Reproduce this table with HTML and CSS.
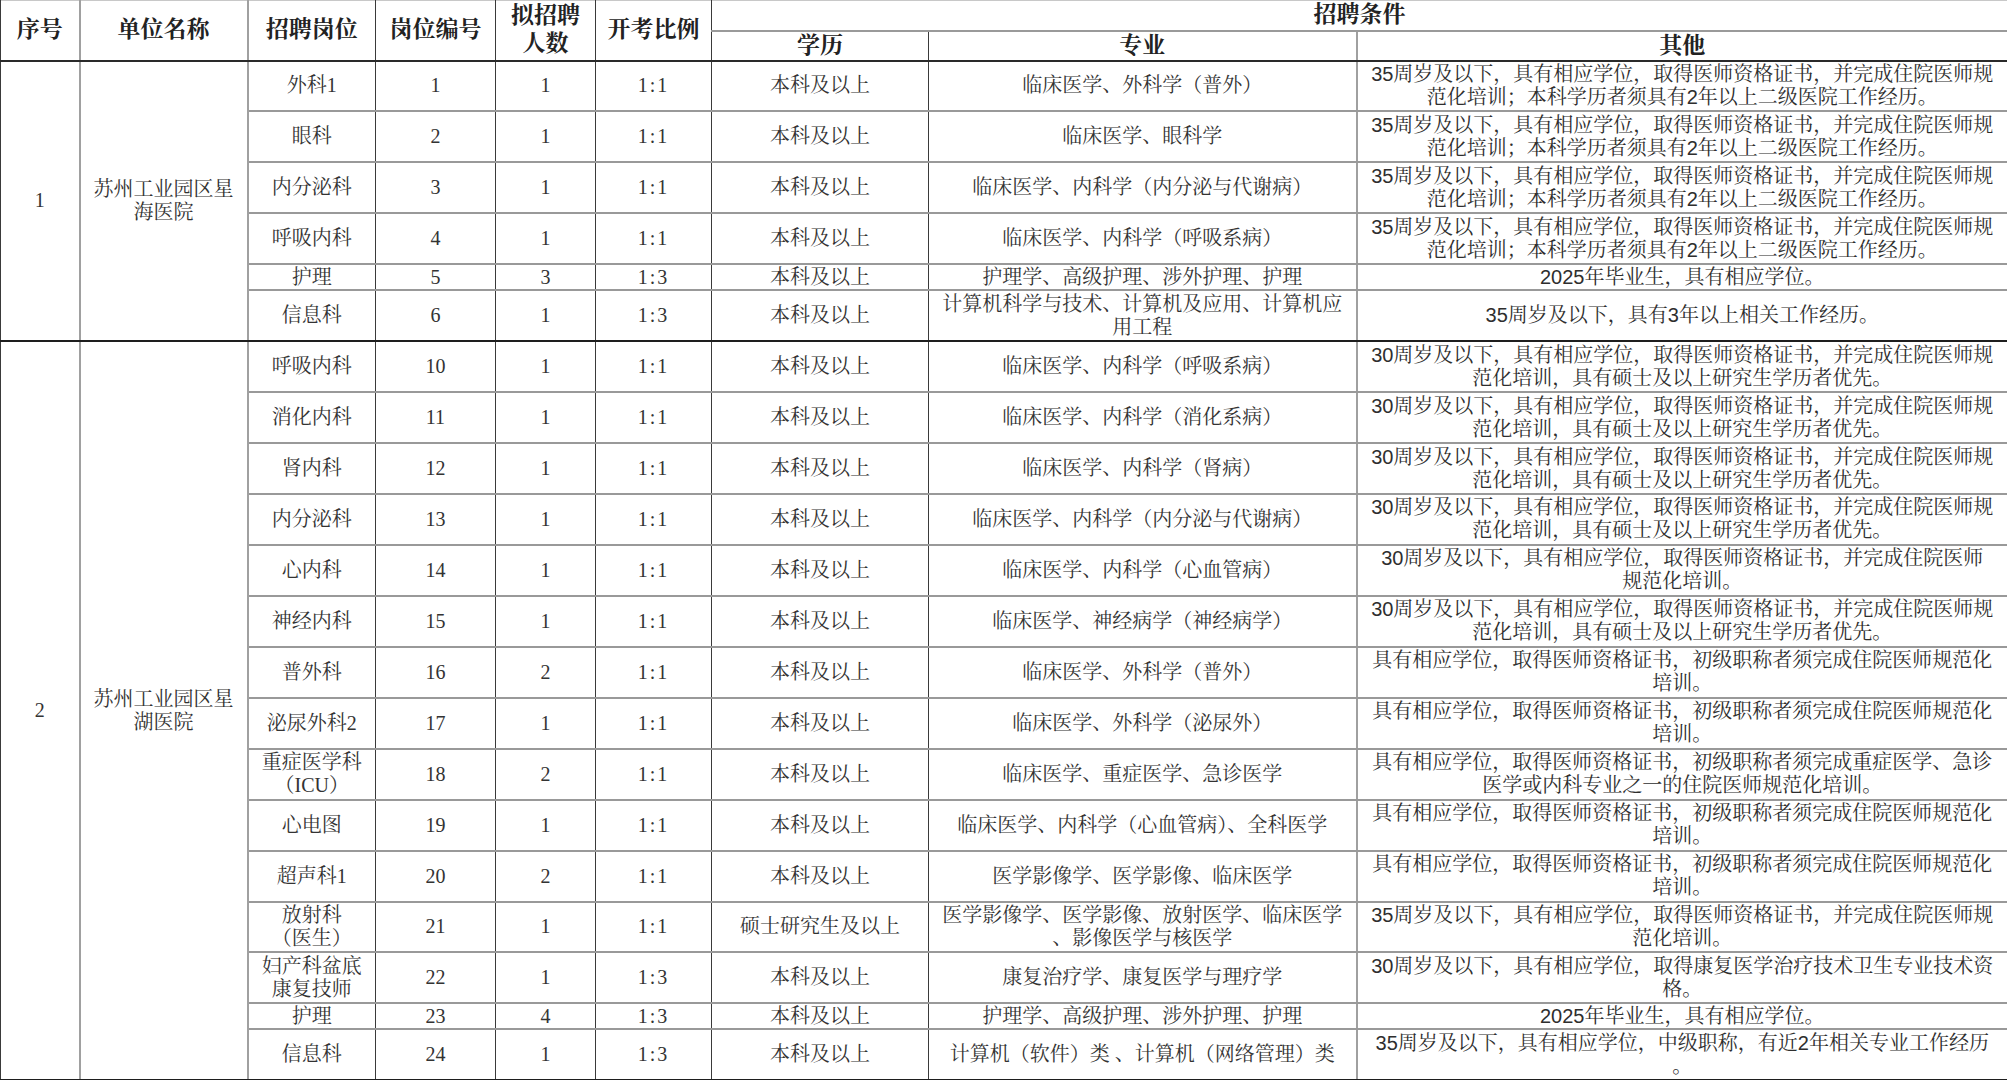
FILE: index.html
```html
<!DOCTYPE html>
<html lang="zh-CN">
<head>
<meta charset="utf-8">
<title>招聘岗位表</title>
<link rel="stylesheet" href="styles.css">
</head>
<body>
<table class="tbl">
  <colgroup>
    <col class="c-no"><col class="c-unit"><col class="c-post"><col class="c-code"><col class="c-num"><col class="c-ratio"><col class="c-edu"><col class="c-major"><col class="c-other">
  </colgroup>
  <thead>
    <tr class="h1">
      <th rowspan="2" class="gl">序号</th>
      <th rowspan="2" class="gl">单位名称</th>
      <th rowspan="2">招聘岗位</th>
      <th rowspan="2">岗位编号</th>
      <th rowspan="2" class="two">拟招聘<br>人数</th>
      <th rowspan="2">开考比例</th>
      <th colspan="3" class="cond">招聘条件</th>
    </tr>
    <tr class="h2">
      <th>学历</th>
      <th class="gl">专业</th>
      <th>其他</th>
    </tr>
  </thead>
  <tbody>
    <tr class="t">
      <td rowspan="6" class="gl num grp">1</td>
      <td rowspan="6" class="gl grp">苏州工业园区星<br>海医院</td>
      <td>外科1</td><td class="num">1</td><td class="num">1</td><td class="num ratio">1:1</td>
      <td>本科及以上</td><td class="gl">临床医学、外科学（普外）</td>
      <td class="oth">35周岁及以下，具有相应学位，取得医师资格证书，并完成住院医师规<br>范化培训；本科学历者须具有2年以上二级医院工作经历。</td>
    </tr>
    <tr class="t">
      <td>眼科</td><td class="num">2</td><td class="num">1</td><td class="num ratio">1:1</td>
      <td>本科及以上</td><td class="gl">临床医学、眼科学</td>
      <td class="oth">35周岁及以下，具有相应学位，取得医师资格证书，并完成住院医师规<br>范化培训；本科学历者须具有2年以上二级医院工作经历。</td>
    </tr>
    <tr class="t">
      <td>内分泌科</td><td class="num">3</td><td class="num">1</td><td class="num ratio">1:1</td>
      <td>本科及以上</td><td class="gl">临床医学、内科学（内分泌与代谢病）</td>
      <td class="oth">35周岁及以下，具有相应学位，取得医师资格证书，并完成住院医师规<br>范化培训；本科学历者须具有2年以上二级医院工作经历。</td>
    </tr>
    <tr class="t">
      <td>呼吸内科</td><td class="num">4</td><td class="num">1</td><td class="num ratio">1:1</td>
      <td>本科及以上</td><td class="gl">临床医学、内科学（呼吸系病）</td>
      <td class="oth">35周岁及以下，具有相应学位，取得医师资格证书，并完成住院医师规<br>范化培训；本科学历者须具有2年以上二级医院工作经历。</td>
    </tr>
    <tr class="s">
      <td>护理</td><td class="num">5</td><td class="num">3</td><td class="num ratio">1:3</td>
      <td>本科及以上</td><td class="gl">护理学、高级护理、涉外护理、护理</td>
      <td class="oth">2025年毕业生，具有相应学位。</td>
    </tr>
    <tr class="t end">
      <td>信息科</td><td class="num">6</td><td class="num">1</td><td class="num ratio">1:3</td>
      <td>本科及以上</td><td class="gl">计算机科学与技术、计算机及应用、计算机应<br>用工程</td>
      <td class="oth">35周岁及以下，具有3年以上相关工作经历。</td>
    </tr>

    <tr class="t">
      <td rowspan="15" class="gl num grp">2</td>
      <td rowspan="15" class="gl grp">苏州工业园区星<br>湖医院</td>
      <td>呼吸内科</td><td class="num">10</td><td class="num">1</td><td class="num ratio">1:1</td>
      <td>本科及以上</td><td class="gl">临床医学、内科学（呼吸系病）</td>
      <td class="oth">30周岁及以下，具有相应学位，取得医师资格证书，并完成住院医师规<br>范化培训，具有硕士及以上研究生学历者优先。</td>
    </tr>
    <tr class="t">
      <td>消化内科</td><td class="num">11</td><td class="num">1</td><td class="num ratio">1:1</td>
      <td>本科及以上</td><td class="gl">临床医学、内科学（消化系病）</td>
      <td class="oth">30周岁及以下，具有相应学位，取得医师资格证书，并完成住院医师规<br>范化培训，具有硕士及以上研究生学历者优先。</td>
    </tr>
    <tr class="t">
      <td>肾内科</td><td class="num">12</td><td class="num">1</td><td class="num ratio">1:1</td>
      <td>本科及以上</td><td class="gl">临床医学、内科学（肾病）</td>
      <td class="oth">30周岁及以下，具有相应学位，取得医师资格证书，并完成住院医师规<br>范化培训，具有硕士及以上研究生学历者优先。</td>
    </tr>
    <tr class="t">
      <td>内分泌科</td><td class="num">13</td><td class="num">1</td><td class="num ratio">1:1</td>
      <td>本科及以上</td><td class="gl">临床医学、内科学（内分泌与代谢病）</td>
      <td class="oth">30周岁及以下，具有相应学位，取得医师资格证书，并完成住院医师规<br>范化培训，具有硕士及以上研究生学历者优先。</td>
    </tr>
    <tr class="t">
      <td>心内科</td><td class="num">14</td><td class="num">1</td><td class="num ratio">1:1</td>
      <td>本科及以上</td><td class="gl">临床医学、内科学（心血管病）</td>
      <td class="oth">30周岁及以下，具有相应学位，取得医师资格证书，并完成住院医师<br>规范化培训。</td>
    </tr>
    <tr class="t">
      <td>神经内科</td><td class="num">15</td><td class="num">1</td><td class="num ratio">1:1</td>
      <td>本科及以上</td><td class="gl">临床医学、神经病学（神经病学）</td>
      <td class="oth">30周岁及以下，具有相应学位，取得医师资格证书，并完成住院医师规<br>范化培训，具有硕士及以上研究生学历者优先。</td>
    </tr>
    <tr class="t">
      <td>普外科</td><td class="num">16</td><td class="num">2</td><td class="num ratio">1:1</td>
      <td>本科及以上</td><td class="gl">临床医学、外科学（普外）</td>
      <td class="oth">具有相应学位，取得医师资格证书，初级职称者须完成住院医师规范化<br>培训。</td>
    </tr>
    <tr class="t">
      <td>泌尿外科2</td><td class="num">17</td><td class="num">1</td><td class="num ratio">1:1</td>
      <td>本科及以上</td><td class="gl">临床医学、外科学（泌尿外）</td>
      <td class="oth">具有相应学位，取得医师资格证书，初级职称者须完成住院医师规范化<br>培训。</td>
    </tr>
    <tr class="t">
      <td>重症医学科<br>（ICU）</td><td class="num">18</td><td class="num">2</td><td class="num ratio">1:1</td>
      <td>本科及以上</td><td class="gl">临床医学、重症医学、急诊医学</td>
      <td class="oth">具有相应学位，取得医师资格证书，初级职称者须完成重症医学、急诊<br>医学或内科专业之一的住院医师规范化培训。</td>
    </tr>
    <tr class="t">
      <td>心电图</td><td class="num">19</td><td class="num">1</td><td class="num ratio">1:1</td>
      <td>本科及以上</td><td class="gl">临床医学、内科学（心血管病）、全科医学</td>
      <td class="oth">具有相应学位，取得医师资格证书，初级职称者须完成住院医师规范化<br>培训。</td>
    </tr>
    <tr class="t">
      <td>超声科1</td><td class="num">20</td><td class="num">2</td><td class="num ratio">1:1</td>
      <td>本科及以上</td><td class="gl">医学影像学、医学影像、临床医学</td>
      <td class="oth">具有相应学位，取得医师资格证书，初级职称者须完成住院医师规范化<br>培训。</td>
    </tr>
    <tr class="t">
      <td>放射科<br>（医生）</td><td class="num">21</td><td class="num">1</td><td class="num ratio">1:1</td>
      <td>硕士研究生及以上</td><td class="gl">医学影像学、医学影像、放射医学、临床医学<br>、影像医学与核医学</td>
      <td class="oth">35周岁及以下，具有相应学位，取得医师资格证书，并完成住院医师规<br>范化培训。</td>
    </tr>
    <tr class="t">
      <td>妇产科盆底<br>康复技师</td><td class="num">22</td><td class="num">1</td><td class="num ratio">1:3</td>
      <td>本科及以上</td><td class="gl">康复治疗学、康复医学与理疗学</td>
      <td class="oth">30周岁及以下，具有相应学位，取得康复医学治疗技术卫生专业技术资<br>格。</td>
    </tr>
    <tr class="s">
      <td>护理</td><td class="num">23</td><td class="num">4</td><td class="num ratio">1:3</td>
      <td>本科及以上</td><td class="gl">护理学、高级护理、涉外护理、护理</td>
      <td class="oth">2025年毕业生，具有相应学位。</td>
    </tr>
    <tr class="t end">
      <td>信息科</td><td class="num">24</td><td class="num">1</td><td class="num ratio">1:3</td>
      <td>本科及以上</td><td class="gl">计算机（软件）类&nbsp;、计算机（网络管理）类</td>
      <td class="oth">35周岁及以下，具有相应学位，中级职称，有近2年相关专业工作经历<br>。</td>
    </tr>
  </tbody>
</table>
</body>
</html>
```

FILE: styles.css
```css
html, body {
  margin: 0;
  padding: 0;
  background: #ffffff;
  overflow: hidden;
}

.tbl {
  width: 2007px;
  border-collapse: collapse;
  table-layout: fixed;
  font-family: "Liberation Serif", "Noto Serif CJK SC", "Noto Sans CJK SC", serif;
  color: #333333;
  border-top: 1px solid #c8c8c8;
}

.c-no { width: 79px; }
.c-unit { width: 168px; }
.c-post { width: 128px; }
.c-code { width: 120px; }
.c-num { width: 100px; }
.c-ratio { width: 116px; }
.c-edu { width: 217px; }
.c-major { width: 428px; }
.c-other { width: 651px; }

.tbl th,
.tbl td {
  padding: 0;
  text-align: center;
  vertical-align: middle;
  white-space: nowrap;
  overflow: visible;
  border-left: 1px solid #3a3a3a;
  border-right: 1px solid #3a3a3a;
}

.tbl th {
  font-size: 23px;
  font-weight: 700;
  color: #222222;
  line-height: 28px;
}

.tbl .h1 { height: 30px; }
.tbl .h2 { height: 30px; }

.tbl .h1 th.cond {
  text-align: center;
  border-bottom: 2px solid #9a9a9a;
  line-height: 28px;
}

.tbl .h2 th {
  border-bottom: 2px solid #2a2a2a;
}

.tbl .h1 th[rowspan] {
  border-bottom: 2px solid #2a2a2a;
}

.tbl td {
  font-size: 20px;
  line-height: 23px;
  border-bottom: 2px solid #999999;
}

.tbl tr.t { height: 50.95px; }
.tbl tr.s { height: 26px; }

.tbl tr.s td { line-height: 22px; }

.tbl .gl {
  border-right: 2px solid #a0a0a0;
}

.tbl td.num {
  font-family: "Liberation Serif", serif;
}

.tbl td.ratio {
  letter-spacing: 2px;
}

.tbl td.oth {
  font-family: "Liberation Sans Narrow", "Liberation Sans", "Noto Serif CJK SC", "Noto Sans CJK SC", sans-serif;
  color: #2e2e2e;
}

.tbl tr.end td,
.tbl td.grp {
  border-bottom: 2px solid #1e1e1e;
}
```
